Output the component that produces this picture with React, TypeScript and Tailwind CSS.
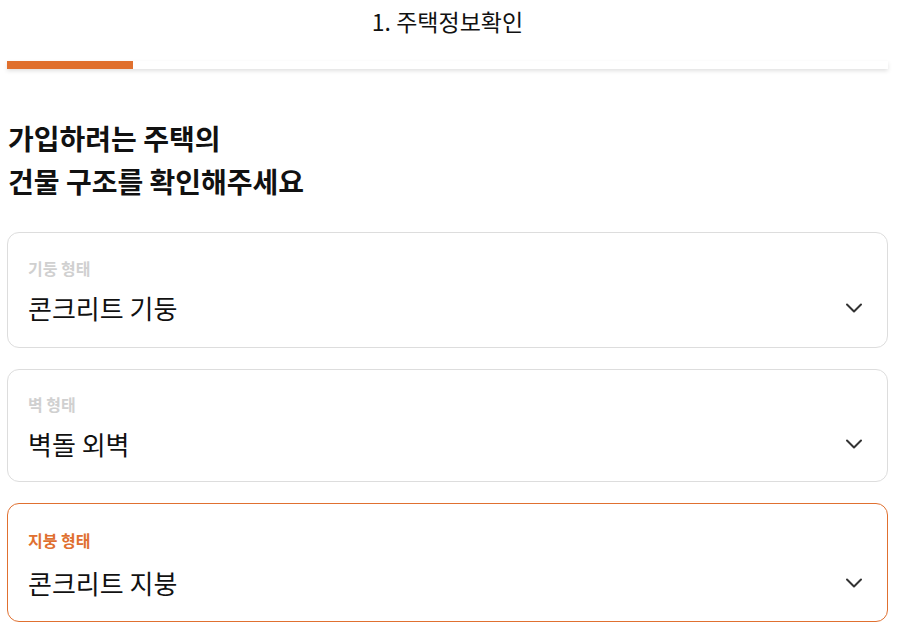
import React from "react";

const Chevron = () => (
  <svg width="18" height="12" viewBox="0 0 18 12" fill="none" className="shrink-0">
    <path d="M2 2.5 L9 9.5 L16 2.5" stroke="#333" strokeWidth="2" strokeLinecap="round" strokeLinejoin="round" />
  </svg>
);

type CardProps = { label: string; value: string; active?: boolean; box: string; gap: string };

const Card = ({ label, value, active, box, gap }: CardProps) => (
  <div className={box}>
    <div
      className={
        active
          ? "text-[16px] leading-[20px] font-bold text-[#e07030]"
          : "text-[16px] leading-[20px] font-bold text-[#d0d0d0]"
      }
    >
      {label}
    </div>
    <div className={gap}>
      <span className="text-[26px] leading-[32px] text-[#111]">{value}</span>
      <Chevron />
    </div>
  </div>
);

export default function App() {
  return (
    <div
      className="w-[918px] h-[636px] overflow-hidden bg-white pl-[7px] pr-[30px]"
      style={{ fontFamily: '"Noto Sans CJK KR", "Noto Sans", sans-serif' }}
    >
      <div className="h-[61px] pt-[7px] text-center text-[23px] leading-[28px] font-normal text-[#111]">1. 주택정보확인</div>
      <div className="h-[8px] bg-white shadow-[0_2px_4px_rgba(0,0,0,0.12)]">
        <div className="h-full w-[126px] bg-[#e0702e]" />
      </div>
      <h1 className="mt-[48px] pl-[1px] text-[28px] leading-[43px] font-bold text-[#111]">
        가입하려는 주택의
        <br />
        건물 구조를 확인해주세요
      </h1>
      <div className="mt-[29px] flex flex-col gap-[21px]">
        <Card
          label="기둥 형태"
          value="콘크리트 기둥"
          box="rounded-[12px] border border-[#dddddd] pl-[20px] pr-[24px] pt-[25px] pb-[23px]"
          gap="mt-[14px] flex items-center justify-between"
        />
        <Card
          label="벽 형태"
          value="벽돌 외벽"
          box="rounded-[12px] border border-[#dddddd] pl-[20px] pr-[24px] pt-[24px] pb-[21px]"
          gap="mt-[14px] flex items-center justify-between"
        />
        <Card
          label="지붕 형태"
          value="콘크리트 지붕"
          active
          box="rounded-[12px] border border-[#e07030] pl-[20px] pr-[24px] pt-[26px] pb-[22px]"
          gap="mt-[17px] flex items-center justify-between"
        />
      </div>
    </div>
  );
}
